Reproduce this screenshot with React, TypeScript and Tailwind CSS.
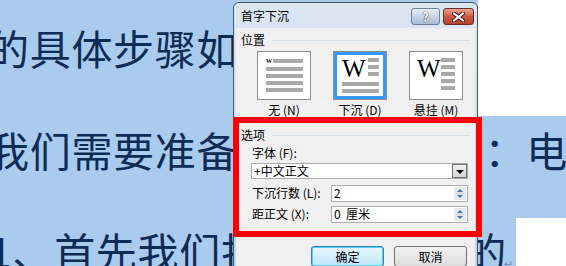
const docFont = { fontFamily: '"Noto Sans CJK SC", "Noto Sans", sans-serif' };

function Bars({ count, className }: { count: number; className: string }) {
  return (
    <div className={`flex flex-col gap-[3px] ${className}`}>
      {Array.from({ length: count }).map((_, i) => (
        <div key={i} className="h-[4px] bg-[#a9a9a9]" />
      ))}
    </div>
  );
}

function Spin({ value }: { value: string }) {
  return (
    <div className="flex h-[17px] w-[137px] items-center border border-[#abadb3] bg-white">
      <span className="flex-1 whitespace-pre pl-[2px] leading-none">{value}</span>
      <div className="mr-[1px] flex h-[13px] w-[12px] flex-col justify-center gap-[1px] rounded-[1px] bg-[#e7eaee]">
        <span className="mx-auto h-0 w-0 border-x-[3px] border-b-[3px] border-x-transparent border-b-[#4f6fa8]" />
        <span className="mx-auto h-px w-[8px] bg-[#c9cfd6]" />
        <span className="mx-auto h-0 w-0 border-x-[3px] border-t-[3px] border-x-transparent border-t-[#4f6fa8]" />
      </div>
    </div>
  );
}

export default function App() {
  return (
    <div className="relative h-[266px] w-[566px] overflow-hidden bg-white">
      {/* document behind the dialog */}
      <div className="flex flex-col text-[41px] leading-[41px] tracking-[0.7px] text-[#0d2c55]" style={docFont}>
        <div className="mt-[-88px] h-[102px] w-[478px] bg-[#a8cbee]" />
        <div className="h-[102px] w-[478px] overflow-hidden bg-[#a8cbee] pt-[13px]">
          <div className="ml-[-12px] whitespace-nowrap">的具体步骤如下</div>
        </div>
        <div className="flex h-[102px] w-[566px] justify-between overflow-hidden bg-[#a8cbee] pt-[13px]">
          <div className="ml-[-12px] whitespace-nowrap">我们需要准备</div>
          <div className="mr-[-2px] whitespace-nowrap">：电</div>
        </div>
        <div className="flex h-[102px] w-[516px] items-start justify-between overflow-hidden bg-[#a8cbee] pt-[12px]">
          <div className="ml-[-11px] whitespace-nowrap">1、首先我们打开</div>
          <div className="flex items-end whitespace-nowrap">
            <span className="tracking-[-10px]">的</span>
            <span className="mb-[2px] ml-[8px] mr-[2px] text-[11px] leading-none text-[#7a8aa0]">↵</span>
          </div>
        </div>
      </div>

      {/* dialog */}
      <div
        className="absolute left-[233px] top-[2px] h-[280px] w-[245px] rounded-t-[6px] border border-[#4b5666] bg-gradient-to-b from-[#dbe6f3] to-[#c3d5e9] px-[2px] text-[12px] text-black"
        style={docFont}
      >
        <div className="flex h-[25px] items-center justify-between">
          <span className="pl-[5px] pt-[1px] text-[12px]">首字下沉</span>
          <div className="flex gap-[3px] pr-[1px] pt-[2px]">
            <div className="flex h-[17px] w-[29px] items-center justify-center rounded-[3px] border border-[#6f8196] bg-gradient-to-b from-[#e6eef7] to-[#a9bcd2]">
              <span className="text-[13px] font-bold leading-none text-white [text-shadow:0_0_1px_#222,0_0_1px_#222]">?</span>
            </div>
            <div className="flex h-[17px] w-[31px] items-center justify-center rounded-[3px] border border-[#6d2c24] bg-gradient-to-b from-[#e9a592] via-[#c95a45] to-[#b3402c]">
              <svg width="13" height="10" viewBox="0 0 13 10">
                <path d="M2 1.5 L11 8.5 M11 1.5 L2 8.5" stroke="#3b1a14" strokeWidth="4" strokeLinecap="square" />
                <path d="M2 1.5 L11 8.5 M11 1.5 L2 8.5" stroke="#fff" strokeWidth="2" strokeLinecap="square" />
              </svg>
            </div>
          </div>
        </div>

        <div className="h-[260px] bg-[#f0f0f0]">
          {/* 位置 */}
          <div className="flex items-center gap-[7px] px-[5px] pt-[5px] leading-[14px]">
            <span>位置</span>
            <div className="h-px flex-1 bg-[#d5dfe5]" />
          </div>
          <div className="mt-[4px] flex gap-[22px] pl-[21px]">
            <div className="flex w-[54px] flex-col items-center">
              <div className="h-[49px] w-[54px] border border-[#8e8f8f] bg-white pl-[8px] pr-[7px] pt-[6px]">
                <div className="flex items-center">
                  <span className="mr-[1px] text-[6px] font-bold leading-none" style={{ fontFamily: '"Liberation Serif", serif' }}>W</span>
                  <div className="h-[4px] flex-1 bg-[#a9a9a9]" />
                </div>
                <Bars count={4} className="mt-[3px]" />
              </div>
              <span className="mt-[3px] leading-[14px]">无 (N)</span>
            </div>
            <div className="flex w-[54px] flex-col items-center">
              <div className="h-[49px] w-[54px] border border-[#8e8f8f] bg-white">
                <div className="h-full w-full border-[3px] border-[#3399ff] pl-[5px] pr-[4px] pt-[3px]">
                  <div className="flex">
                    <span className="w-[26px] text-[25px] leading-[21px]" style={{ fontFamily: '"Liberation Serif", serif' }}>W</span>
                    <Bars count={3} className="flex-1" />
                  </div>
                  <Bars count={2} className="mt-[3px]" />
                </div>
              </div>
              <span className="mt-[3px] leading-[14px]">下沉 (D)</span>
            </div>
            <div className="flex w-[54px] flex-col items-center">
              <div className="flex h-[49px] w-[54px] border border-[#8e8f8f] bg-white pl-[7px] pr-[7px] pt-[6px]">
                <span className="w-[24px] text-[25px] leading-[21px]" style={{ fontFamily: '"Liberation Serif", serif' }}>W</span>
                <Bars count={5} className="flex-1" />
              </div>
              <span className="mt-[3px] leading-[14px]">悬挂 (M)</span>
            </div>
          </div>

          {/* 选项 */}
          <div className="mt-[11px] flex items-center gap-[7px] px-[5px] leading-[14px]">
            <span>选项</span>
            <div className="h-px flex-1 bg-[#d5dfe5]" />
          </div>
          <div className="mt-[4px] pl-[16px] leading-[14px]">字体 (F):</div>
          <div className="ml-[15px] mt-[3px] flex h-[16px] w-[217px] items-center border border-[#abadb3] bg-white">
            <span className="flex-1 pl-[2px] leading-none">+中文正文</span>
            <div className="flex h-[14px] w-[15px] items-center justify-center border border-[#707070] bg-gradient-to-b from-[#f2f2f2] to-[#d6d6d6]">
              <span className="mt-[1px] h-0 w-0 border-x-[4px] border-t-[4px] border-x-transparent border-t-black" />
            </div>
          </div>
          <div className="mt-[5px] flex items-center pl-[16px] pr-[7px]">
            <span className="flex-1">下沉行数 (L):</span>
            <Spin value="2" />
          </div>
          <div className="mt-[3px] flex items-center pl-[16px] pr-[7px]">
            <span className="flex-1">距正文 (X):</span>
            <Spin value="0  厘米" />
          </div>

          <div className="mt-[23px] flex gap-[10px] pl-[75px]">
            <button className="h-[21px] w-[73px] rounded-[3px] border border-[#3c7fb1] bg-gradient-to-b from-[#eaf6fd] to-[#bee6fd] shadow-[inset_0_0_0_1px_#48d3fb]">确定</button>
            <button className="h-[21px] w-[73px] rounded-[3px] border border-[#707070] bg-gradient-to-b from-[#f2f2f2] to-[#dcdcdc]">取消</button>
          </div>
        </div>
      </div>

      {/* red highlight drawn over the options group */}
      <div className="absolute left-[233px] top-[117px] h-[120px] w-[249px] border-[6px] border-[#ff0000]" />
    </div>
  );
}
